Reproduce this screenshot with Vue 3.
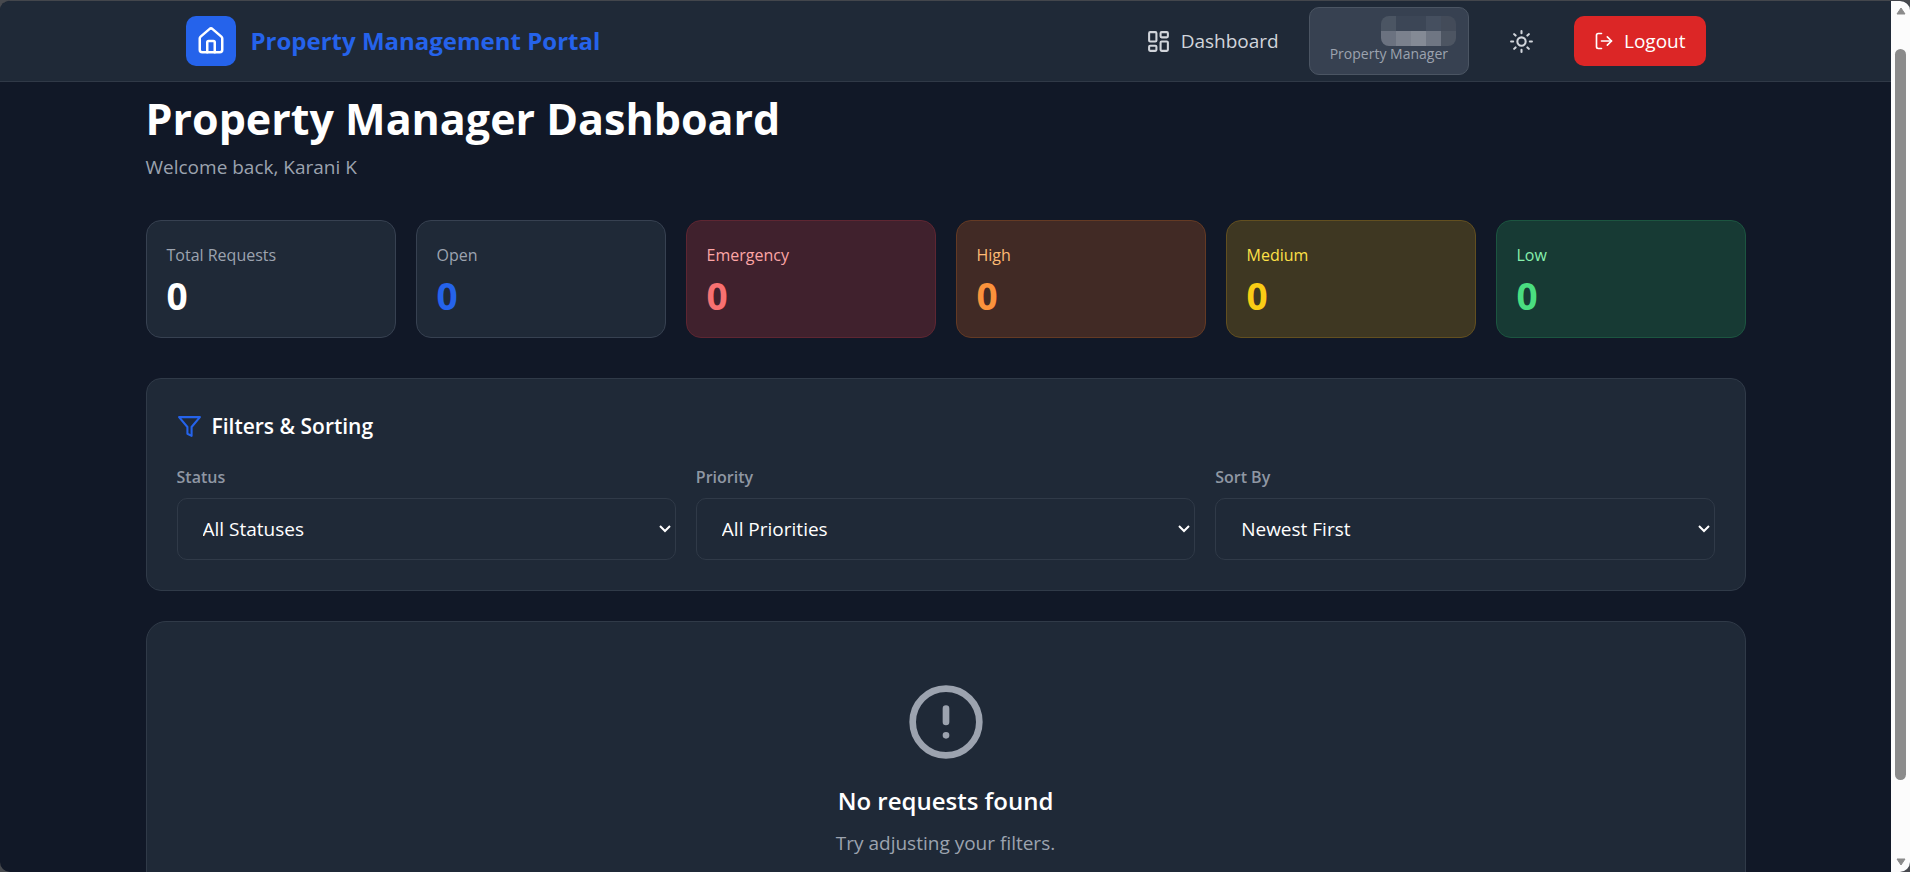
<template>
  <div class="window">
    <div class="viewport">
      <header class="navbar">
        <div class="navbar-inner">
          <a href="#" class="brand">
            <span class="brand-logo">
              <svg class="icon icon-home" viewBox="0 0 24 24">
                <path d="M15 21v-8a1 1 0 0 0-1-1h-4a1 1 0 0 0-1 1v8" />
                <path d="M3 10a2 2 0 0 1 .709-1.528l7-5.999a2 2 0 0 1 2.582 0l7 5.999A2 2 0 0 1 21 10v9a2 2 0 0 1-2 2H5a2 2 0 0 1-2-2z" />
              </svg>
            </span>
            <span class="brand-name">Property Management Portal</span>
          </a>

          <nav class="nav-actions">
            <a href="#" class="nav-link">
              <svg class="icon" viewBox="0 0 24 24">
                <rect x="3" y="3" width="7" height="9" rx="1" />
                <rect x="14" y="3" width="7" height="5" rx="1" />
                <rect x="14" y="12" width="7" height="9" rx="1" />
                <rect x="3" y="16" width="7" height="5" rx="1" />
              </svg>
              <span>Dashboard</span>
            </a>

            <div class="user-card">
              <span class="user-name" aria-hidden="true">
                <i v-for="(color, index) in nameBlocks" :key="index" :style="{ backgroundColor: color }"></i>
              </span>
              <span class="user-role">Property Manager</span>
            </div>

            <button type="button" class="theme-toggle" aria-label="Toggle theme">
              <svg class="icon" viewBox="0 0 24 24">
                <circle cx="12" cy="12" r="4" />
                <path d="M12 2v2M12 20v2M4.93 4.93l1.41 1.41M17.66 17.66l1.41 1.41M2 12h2M20 12h2M6.34 17.66l-1.41 1.41M19.07 4.93l-1.41 1.41" />
              </svg>
            </button>

            <button type="button" class="logout">
              <svg class="icon icon-small" viewBox="0 0 24 24">
                <path d="M9 21H5a2 2 0 0 1-2-2V5a2 2 0 0 1 2-2h4" />
                <path d="m16 17 5-5-5-5" />
                <path d="M21 12H9" />
              </svg>
              <span>Logout</span>
            </button>
          </nav>
        </div>
      </header>

      <main class="content">
        <div class="page-header">
          <h1>Property Manager Dashboard</h1>
          <p>Welcome back, Karani K</p>
        </div>

        <section class="stats">
          <div v-for="stat in stats" :key="stat.label" :class="['stat', `stat-${stat.type}`]">
            <span class="stat-label">{{ stat.label }}</span>
            <span class="stat-value">{{ stat.value }}</span>
          </div>
        </section>

        <section class="panel filters">
          <h2 class="filters-title">
            <svg class="icon icon-filter" viewBox="0 0 24 24">
              <path d="M22 3H2l8 9.46V19l4 2v-8.54z" />
            </svg>
            <span>Filters &amp; Sorting</span>
          </h2>
          <div class="filters-grid">
            <div v-for="filter in filters" :key="filter.id" class="field">
              <label :for="filter.id">{{ filter.label }}</label>
              <div class="select-wrap">
                <select :id="filter.id" v-model="filter.value">
                  <option v-for="option in filter.options" :key="option">{{ option }}</option>
                </select>
                <svg class="select-arrow" viewBox="0 0 12 8">
                  <path d="M1 1l5 5 5-5" />
                </svg>
              </div>
            </div>
          </div>
        </section>

        <section class="panel empty">
          <svg class="icon icon-empty" viewBox="0 0 24 24">
            <circle cx="12" cy="12" r="10" />
            <path d="M12 8v4M12 16h.01" />
          </svg>
          <h3>No requests found</h3>
          <p>Try adjusting your filters.</p>
        </section>
      </main>
    </div>

    <div class="scrollbar" aria-hidden="true">
      <svg class="scroll-arrow" viewBox="0 0 10 8">
        <path d="M5 1l4 6H1z" />
      </svg>
      <div class="scroll-track">
        <div class="scroll-thumb"></div>
      </div>
      <svg class="scroll-arrow" viewBox="0 0 10 8">
        <path d="M5 7l4-6H1z" />
      </svg>
    </div>
  </div>
</template>

<script setup>
import { reactive } from 'vue'

// pixelated user name, two rows of five blocks
const nameBlocks = [
  '#4b5563', '#3c4656', '#3c4656', '#454f5f', '#434b59',
  '#6b7280', '#7b818d', '#848a95', '#6f7683', '#4d5562'
]

const stats = [
  { label: 'Total Requests', value: 0, type: 'total' },
  { label: 'Open', value: 0, type: 'open' },
  { label: 'Emergency', value: 0, type: 'emergency' },
  { label: 'High', value: 0, type: 'high' },
  { label: 'Medium', value: 0, type: 'medium' },
  { label: 'Low', value: 0, type: 'low' }
]

const filters = reactive([
  {
    id: 'status',
    label: 'Status',
    value: 'All Statuses',
    options: ['All Statuses', 'Open', 'In Progress', 'Closed']
  },
  {
    id: 'priority',
    label: 'Priority',
    value: 'All Priorities',
    options: ['All Priorities', 'Emergency', 'High', 'Medium', 'Low']
  },
  {
    id: 'sort',
    label: 'Sort By',
    value: 'Newest First',
    options: ['Newest First', 'Oldest First', 'Priority']
  }
])
</script>

<style>
body {
  margin: 0;
  background-color: #47494e;
}
</style>

<style scoped>
* {
  box-sizing: border-box;
}

h1,
h2,
h3,
p {
  margin: 0;
}

.window {
  display: flex;
  height: 100vh;
  overflow: hidden;
  border-top: 1px solid #43464c;
  border-radius: 10px;
  background-color: #111827;
  color: #ffffff;
  font-family: "Segoe UI", "Open Sans", "Noto Sans", sans-serif;
  font-size: 19px;
  line-height: 30px;
}

.viewport {
  flex: 1;
  min-width: 0;
  overflow: hidden;
}

.icon {
  flex: none;
  width: 25px;
  height: 25px;
  fill: none;
  stroke: currentColor;
  stroke-width: 2;
  stroke-linecap: round;
  stroke-linejoin: round;
}

.icon-small {
  width: 20px;
  height: 20px;
}

.icon-home {
  width: 30px;
  height: 30px;
}

.navbar {
  background-color: #1f2937;
  border-bottom: 1px solid #303947;
}

.navbar-inner {
  display: flex;
  align-items: center;
  justify-content: space-between;
  max-width: 1600px;
  height: 80px;
  margin: 0 auto;
  padding: 0 40px;
}

.brand {
  display: flex;
  align-items: center;
  gap: 15px;
  color: #2563eb;
  text-decoration: none;
}

.brand-logo {
  display: flex;
  align-items: center;
  justify-content: center;
  width: 50px;
  height: 50px;
  border-radius: 10px;
  background-color: #2563eb;
  color: #ffffff;
}

.brand-name {
  font-size: 24px;
  font-weight: 700;
}

.nav-actions {
  display: flex;
  align-items: center;
  gap: 30px;
}

.nav-link {
  display: flex;
  align-items: center;
  gap: 10px;
  color: #d1d5db;
  text-decoration: none;
}

.user-card {
  display: flex;
  flex-direction: column;
  align-items: flex-end;
  height: 68px;
  padding: 8px 20px;
  border: 1px solid #4b5563;
  border-radius: 10px;
  background-color: #374151;
}

.user-name {
  display: grid;
  grid-template-columns: repeat(5, 15px);
  grid-template-rows: repeat(2, 15px);
  margin-right: -8px;
  border-radius: 8px;
  overflow: hidden;
}

.user-role {
  color: #9ca3af;
  font-size: 14px;
  line-height: 16px;
}

.theme-toggle {
  display: flex;
  padding: 10px;
  border: none;
  border-radius: 10px;
  background: none;
  color: #d1d5db;
  cursor: pointer;
}

.logout {
  display: flex;
  align-items: center;
  gap: 10px;
  padding: 10px 20px;
  border: none;
  border-radius: 10px;
  background-color: #dc2626;
  color: #ffffff;
  font: inherit;
  font-weight: 500;
  cursor: pointer;
}

.content {
  max-width: 1600px;
  margin: 0 auto;
  padding: 12px 0 40px;
}

.page-header {
  margin-bottom: 38px;
}

.page-header h1 {
  margin-bottom: 8px;
  font-size: 43px;
  font-weight: 700;
  line-height: 50px;
}

.page-header p {
  color: #9ca3af;
}

.stats {
  display: grid;
  grid-template-columns: repeat(6, 1fr);
  gap: 20px;
  margin-bottom: 40px;
}

.stat {
  display: flex;
  flex-direction: column;
  gap: 4px;
  padding: 20px 20px 18px;
  border: 1px solid #374151;
  border-radius: 15px;
  background-color: #1f2937;
}

.stat-label {
  color: #9ca3af;
  font-size: 16px;
  line-height: 28px;
}

.stat-value {
  font-size: 37px;
  font-weight: 700;
  line-height: 46px;
}

.stat-open .stat-value {
  color: #2563eb;
}

.stat-emergency {
  border-color: #5e2632;
  background-color: #40212d;
}

.stat-emergency .stat-label {
  color: #fca5a5;
}

.stat-emergency .stat-value {
  color: #f87171;
}

.stat-high {
  border-color: #643a24;
  background-color: #412a25;
}

.stat-high .stat-label {
  color: #fdba74;
}

.stat-high .stat-value {
  color: #fb923c;
}

.stat-medium {
  border-color: #624f20;
  background-color: #3e3722;
}

.stat-medium .stat-label {
  color: #fde047;
}

.stat-medium .stat-value {
  color: #facc15;
}

.stat-low {
  border-color: #1c5540;
  background-color: #173a34;
}

.stat-low .stat-label {
  color: #86efac;
}

.stat-low .stat-value {
  color: #4ade80;
}

.panel {
  border: 1px solid #303a48;
  background-color: #1f2937;
}

.filters {
  margin-bottom: 30px;
  padding: 30px;
  border-radius: 15px;
}

.filters-title {
  display: flex;
  align-items: center;
  gap: 10px;
  margin-bottom: 20px;
  font-size: 21px;
  font-weight: 600;
  line-height: 35px;
}

.icon-filter {
  color: #2563eb;
}

.filters-grid {
  display: grid;
  grid-template-columns: repeat(3, 1fr);
  gap: 20px;
}

.field {
  display: flex;
  flex-direction: column;
  gap: 8px;
}

.field label {
  color: #8f97a3;
  font-size: 16px;
  font-weight: 600;
  line-height: 26px;
}

.select-wrap {
  position: relative;
}

.select-wrap select {
  display: block;
  width: 100%;
  height: 62px;
  padding: 0 25px;
  border: 1px solid #303a48;
  border-radius: 10px;
  background-color: #1f2937;
  color: #ffffff;
  font: inherit;
  appearance: none;
}

.select-arrow {
  position: absolute;
  top: 27px;
  right: 5px;
  width: 12px;
  height: 8px;
  fill: none;
  stroke: #ffffff;
  stroke-width: 2;
  pointer-events: none;
}

.empty {
  display: flex;
  flex-direction: column;
  align-items: center;
  padding: 60px 30px;
  border-radius: 20px;
}

.icon-empty {
  width: 80px;
  height: 80px;
  margin-bottom: 20px;
  color: #9ca3af;
}

.empty h3 {
  margin-bottom: 8px;
  font-size: 24px;
  font-weight: 600;
  line-height: 38px;
}

.empty p {
  color: #9ca3af;
}

.scrollbar {
  display: flex;
  flex: none;
  flex-direction: column;
  align-items: center;
  width: 19px;
  padding: 6px 0;
  background-color: #fcfcfc;
}

.scroll-arrow {
  flex: none;
  width: 10px;
  height: 8px;
  fill: #8b8b8b;
  stroke: #8b8b8b;
  stroke-width: 1;
  stroke-linejoin: round;
}

.scroll-track {
  display: flex;
  flex: 1;
  padding: 34px 0 78px;
}

.scroll-thumb {
  width: 11px;
  border-radius: 6px;
  background-color: #8b8b8b;
}
</style>
